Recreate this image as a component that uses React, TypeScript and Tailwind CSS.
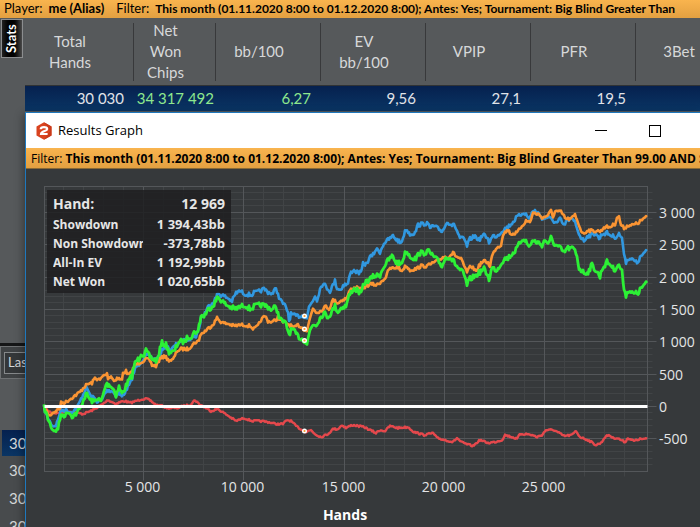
import { ChevronDown } from 'lucide-react';

const STATS_FILTER = 'This month (01.11.2020 8:00 to 01.12.2020 8:00); Antes: Yes; Tournament: Big Blind Greater Than';
const GRAPH_FILTER = `${STATS_FILTER} 99.00 AND St`;

const COLUMNS = [
  { lines: ['Total', 'Hands'], value: '30 030', width: 'w-[109px]', cell: 'pr-[10px]' },
  { lines: ['Net', 'Won', 'Chips'], value: '34 317 492', width: 'w-[82px]', cell: 'pr-[2px] text-[#8ee88e]' },
  { lines: ['bb/100'], value: '6,27', width: 'w-[105px]', cell: 'pr-[10px] text-[#8ee88e]' },
  { lines: ['EV', 'bb/100'], value: '9,56', width: 'w-[105px]', cell: 'pr-[10px]' },
  { lines: ['VPIP'], value: '27,1', width: 'w-[105px]', cell: 'pr-[10px]' },
  { lines: ['PFR'], value: '19,5', width: 'w-[105px]', cell: 'pr-[10px]' },
  { lines: ['3Bet'], value: '', width: 'w-[105px]', cell: 'pr-[10px]' },
];

const LEGEND = [
  ['Showdown', '1 394,43bb'],
  ['Non Showdown', '-373,78bb'],
  ['All-In EV', '1 192,99bb'],
  ['Net Won', '1 020,65bb'],
];

// Plot area, in the units of the chart's viewBox
const LEFT = 44.5;
const RIGHT = 647.5;
const TOP = 186.5;
const BOTTOM = 471.5;

const xOf = (hands: number) => Math.round(42.75 + hands * 0.02005) + 0.5;
const yOf = (bb: number) => Math.round(406 - bb * 0.0647) + 0.5;

const SHOWDOWN =
  '44,407 46,414 50,422 53,426 56,425 58,420 60,412 62,410 66,410 70,412 74,411 78,406 82,397 86,388 88,390 91,397 94,398 98,402 102,400 105,393 108,390 112,391 116,395 119,393 122,397 126,390 130,384 133,375 136,367 139,364 144,358 148,355 152,358 156,360 160,356 163,348 166,346 171,350 175,346 179,342 183,341 188,339 192,337 196,336 199,329 201,317 204,315 208,307 212,303 216,298 218,293 221,295 226,297 232,301 236,293 240,291 245,294 252,295 253,293 258,292 264,289 268,292 273,294 276,287 278,295 281,301 285,306 288,312 289,321 291,314 295,316 298,316 304,316 307,318 309,307 312,302 315,296 317,300 320,289 323,283 327,288 330,291 335,281 337,288 341,290 343,285 348,284 350,274 353,270 357,272 361,273 363,264 367,264 369,258 373,255 376,249 380,252 384,243 388,240 393,236 397,240 401,243 406,229 410,234 415,233 418,225 423,224 427,223 430,228 433,226 437,228 442,231 445,227 447,221 450,224 455,226 457,231 460,238 464,239 467,246 470,239 475,236 479,240 483,235 487,237 489,242 493,236 497,236 502,231 506,228 509,226 513,222 517,217 519,216 524,212 527,216 529,219 532,212 535,211 538,213 543,219 548,217 552,220 557,223 560,219 564,226 567,220 571,219 575,222 577,228 580,236 584,241 587,236 592,235 596,233 599,239 602,234 607,233 612,236 616,237 619,234 622,238 623,248 626,262 629,258 633,260 637,263 642,255 647,251';
const ALL_IN_EV =
  '44,407 47,412 50,416 52,413 56,411 60,408 61,403 66,402 70,399 76,395 80,392 84,387 88,384 92,383 95,378 100,380 103,376 107,374 108,378 111,376 114,381 117,378 122,380 123,373 126,371 128,375 131,373 133,369 135,365 139,363 143,361 147,359 150,361 152,365 156,366 160,359 163,357 164,355 168,360 173,360 177,351 181,349 188,349 192,345 196,342 199,341 200,335 204,332 210,327 214,323 217,318 220,321 223,323 229,324 234,326 240,325 245,325 250,326 254,329 258,326 261,320 265,316 268,321 272,322 276,320 278,317 281,321 285,323 290,325 294,328 298,325 301,327 304,329 307,331 310,318 313,308 316,312 321,311 326,306 329,309 333,300 338,303 342,300 347,298 350,290 356,287 361,290 366,286 371,284 377,285 383,280 386,277 389,269 394,268 398,267 401,271 406,266 410,270 416,269 421,266 427,266 433,263 438,261 443,257 448,257 453,253 457,257 461,259 464,266 467,272 471,266 476,271 481,263 485,261 488,263 490,266 492,256 496,248 501,245 503,234 508,230 511,234 517,233 521,227 526,221 530,222 533,213 538,214 543,218 548,215 551,211 553,217 555,211 561,212 566,219 571,219 575,215 578,222 580,228 583,234 588,230 592,231 595,231 601,231 604,227 610,227 615,224 617,217 619,217 621,225 624,228 629,225 633,225 638,223 643,219 647,217';
const NET_WON =
  '44,407 47,416 50,424 53,430 58,430 59,421 62,415 66,415 68,411 72,416 77,413 81,407 84,398 87,394 90,400 94,402 97,398 101,402 104,392 106,384 110,385 114,390 116,395 119,387 122,394 125,388 129,380 132,376 134,366 136,361 139,359 141,353 144,355 146,351 150,357 153,359 157,361 160,349 162,343 166,345 169,352 174,352 179,341 184,342 188,337 192,336 195,331 198,333 199,325 201,316 204,316 208,310 211,307 214,304 218,297 221,300 225,304 230,307 235,309 240,307 245,305 250,309 255,306 261,305 267,306 272,310 276,306 278,314 281,320 286,324 289,334 292,329 296,334 300,338 304,340 307,344 310,330 313,324 316,325 320,318 324,313 328,317 331,313 335,306 338,312 342,307 346,306 349,296 353,289 357,290 361,294 364,283 369,280 374,276 380,275 383,268 387,262 392,256 396,262 401,264 403,259 406,251 411,257 416,259 419,253 424,253 428,251 433,256 438,261 442,266 446,257 450,257 454,262 458,268 463,273 465,278 467,285 470,279 475,276 480,272 484,269 487,274 489,279 492,268 497,270 500,265 504,259 508,258 512,254 516,250 521,241 524,238 529,247 532,241 537,242 542,245 545,240 549,244 551,238 555,245 560,248 564,253 567,248 574,249 577,256 579,268 584,273 588,272 592,265 597,272 600,277 602,269 607,262 611,265 614,270 618,265 622,270 623,284 626,295 629,290 633,294 638,293 642,287 647,283';
const NON_SHOWDOWN =
  '44,407 48,411 53,413 60,413 66,411 72,412 78,413 83,414 88,412 93,410 98,407 103,404 108,400 112,402 116,404 120,402 125,401 130,403 136,401 142,399 147,399 151,401 156,405 162,406 168,408 178,408 183,406 190,405 195,400 199,404 206,408 211,411 218,409 224,413 230,417 236,421 244,418 252,421 260,421 268,422 276,424 283,424 287,420 291,421 296,426 302,430 306,432 311,430 315,434 321,437 328,434 333,429 338,429 342,425 346,428 352,425 358,426 364,427 372,431 376,433 380,430 385,431 390,426 398,428 408,427 414,432 424,435 433,433 437,438 445,440 453,442 457,438 461,442 466,444 473,446 480,440 488,443 495,442 502,440 505,435 512,437 517,439 520,434 526,434 532,435 537,437 542,435 546,430 554,430 559,433 564,436 572,435 576,431 580,437 588,440 596,445 601,443 605,437 609,435 613,438 617,438 625,442 628,438 634,441 640,439 647,439';

function swings(samples: string, size: number) {
  const pts = samples.split(' ').map((p) => p.split(',').map(Number));
  const out: string[] = [];
  let seed = 7;
  for (let i = 0; i < pts.length - 1; i++) {
    const [x0, y0] = pts[i];
    const [x1, y1] = pts[i + 1];
    for (let x = x0; x < x1; x++) {
      seed = (seed * 16807) % 2147483647;
      const noise = (seed / 2147483647 - 0.5) * 2 * size;
      out.push(`${x},${(y0 + ((y1 - y0) * (x - x0)) / (x1 - x0) + noise).toFixed(1)}`);
    }
  }
  out.push(pts[pts.length - 1].join(','));
  return out.join(' ');
}

const range = (from: number, to: number, step: number) =>
  Array.from({ length: Math.floor((to - from) / step) + 1 }, (_, i) => from + i * step);

const fmt = (n: number) => (Math.abs(n) >= 1000 ? `${Math.floor(n / 1000)} ${String(n % 1000).padStart(3, '0')}` : String(n));

function Chart() {
  return (
    <svg viewBox="26 169 674 358" className="block w-full" role="img" aria-label="Results by hands">
      {/* Grid */}
      <g stroke="#414446" strokeWidth="1">
        {range(-900, 3300, 100).map((v) => (
          <line key={v} x1={LEFT} x2={RIGHT + 5} y1={yOf(v)} y2={yOf(v)} />
        ))}
        {range(1000, 29000, 1000).map((v) => (
          <line key={v} x1={xOf(v)} x2={xOf(v)} y1={TOP} y2={BOTTOM + 5} />
        ))}
      </g>
      <g stroke="#54575a" strokeWidth="1">
        {range(-500, 3000, 500).map((v) => (
          <line key={v} x1={LEFT} x2={RIGHT + 9} y1={yOf(v)} y2={yOf(v)} />
        ))}
        {range(5000, 25000, 5000).map((v) => (
          <line key={v} x1={xOf(v)} x2={xOf(v)} y1={TOP} y2={BOTTOM + 9} />
        ))}
        <rect x={LEFT} y={TOP} width={RIGHT - LEFT} height={BOTTOM - TOP} fill="none" />
      </g>

      {/* Series */}
      <g fill="none" strokeLinejoin="round">
        <polyline points={swings(NON_SHOWDOWN, 0.9)} stroke="#e5484c" strokeWidth="2.4" />
        <polyline points={swings(SHOWDOWN, 2)} stroke="#3198e0" strokeWidth="2.6" />
        <polyline points={swings(ALL_IN_EV, 1.6)} stroke="#fa9433" strokeWidth="2.6" />
        <polyline points={swings(NET_WON, 2.6)} stroke="#2cf035" strokeWidth="2.8" />
      </g>
      <line x1={LEFT} x2={RIGHT} y1="406.5" y2="406.5" stroke="#ffffff" strokeWidth="3" />
      {[316, 329, 340.5, 431].map((y) => (
        <circle key={y} cx="304.5" cy={y} r="1.8" fill="#f59a2d" stroke="#ffffff" strokeWidth="1.4" />
      ))}

      {/* Axis labels */}
      <g fill="#e4e5e6" fontSize="14" fontFamily="'Open Sans', sans-serif">
        {range(-500, 3000, 500).map((v) => (
          <text key={v} x="659" y={yOf(v) + 5}>
            {fmt(v)}
          </text>
        ))}
        {range(5000, 25000, 5000).map((v) => (
          <text key={v} x={xOf(v) - 1} y="492" textAnchor="middle">
            {fmt(v)}
          </text>
        ))}
        <text x="345" y="520" textAnchor="middle" fontWeight="700" fill="#ffffff">
          Hands
        </text>
      </g>
    </svg>
  );
}

function HandInfo() {
  return (
    <div className="absolute top-[21px] left-[21px] w-[184px] h-[103px] bg-[#1e1f21]/85 px-1.5 pt-[3px] font-bold text-[#e6e6e6]">
      <div className="flex justify-between text-sm leading-[22px]">
        <span>Hand:</span>
        <span>12 969</span>
      </div>
      {LEGEND.map(([name, value]) => (
        <div key={name} className="flex justify-between leading-[19px] whitespace-nowrap">
          <span className="w-[90px] overflow-hidden text-[12px]">{name}</span>
          <span className="text-[13px]">{value}</span>
        </div>
      ))}
    </div>
  );
}

function ResultsWindow() {
  return (
    <section className="absolute top-[112px] left-[25px] right-0 min-h-[415px] overflow-hidden border-t border-l border-[#1f78bd] bg-[#36393b] font-['Open_Sans',sans-serif] shadow-[-2px_2px_8px_rgba(0,0,0,0.35)]">
      <header className="flex h-[35px] items-center bg-white pl-2.5 pr-[18px] text-black">
        <svg viewBox="0 0 16 18" className="mr-1.5 h-[18px] w-4" aria-hidden="true">
          <path d="M8 .3 15.5 4.6V13.4L8 17.7 .5 13.4V4.6Z" fill="#d9431f" />
          <path d="M8 .3 15.5 4.6V13.4L8 17.7 14 9Z" fill="#c93a1a" />
          <path d="M4.7 7.2C4.8 5.6 6 5.2 8 5.200C10 5.2 11.200 5.6 11.200 6.900C11.200 9.200 5.200 8.800 5 12H11.600" fill="none" stroke="#ffffff" strokeWidth="2.200" />
        </svg>
        <h1 className="flex-1 text-[13px]">Results Graph</h1>
        <button type="button" aria-label="Minimize" className="flex h-full w-[54px] items-center justify-center">
          <span className="h-px w-3 bg-black" />
        </button>
        <button type="button" aria-label="Maximize" className="flex h-full w-[54px] items-center justify-center">
          <span className="size-3 border border-black" />
        </button>
      </header>
      <p className="h-[21px] overflow-hidden border-b border-[#8a6a35] bg-linear-to-b from-[#f9b44e] to-[#e3a041] pl-[5px] text-[12px] leading-[22px] whitespace-nowrap text-black">
        Filter: <b>{GRAPH_FILTER}</b>
      </p>
      <div className="relative">
        <Chart />
        <HandInfo />
      </div>
    </section>
  );
}

function StatsTable() {
  return (
    <table className="w-[716px] table-fixed border-collapse">
      <thead>
        <tr className="h-[67px]">
          {COLUMNS.map((c, i) => (
            <th key={i} className={`p-0 pt-px font-normal text-[15px] leading-[21px] text-[#d6d8d9] ${c.width}`}>
              <div className="flex h-[58px] flex-col justify-center border-r border-[#38393b] pr-[18px]">
                {c.lines.map((l) => (
                  <span key={l}>{l}</span>
                ))}
              </div>
            </th>
          ))}
        </tr>
      </thead>
      <tbody>
        <tr className="h-[26px] border-t border-[#303335] bg-linear-to-b from-[#06214f] to-[#0a3564] text-right text-[15px] leading-[25px] text-[#e0e3e8]">
          {COLUMNS.map((c, i) => (
            <td key={i} className={`p-0 whitespace-nowrap ${c.cell}`}>
              {c.value}
            </td>
          ))}
        </tr>
      </tbody>
    </table>
  );
}

export default function App() {
  return (
    <main className="relative min-h-screen overflow-hidden bg-[#56595b] font-['Lato',sans-serif]">
      <p className="flex h-[18px] overflow-hidden bg-linear-to-b from-[#f9b44e] to-[#e3a041] pl-1 text-[13px] leading-[17px] whitespace-nowrap text-black">
        <span>Player:</span>
        <b className="ml-1.5">me (Alias)</b>
        <span className="ml-3">Filter:</span>
        <b className="ml-1.5 text-[12px]">{STATS_FILTER}</b>
      </p>
      <div className="flex">
        <aside className="w-[25px] shrink-0 pt-px">
          <button
            type="button"
            className="ml-px flex h-[39px] w-[22px] rotate-180 items-center justify-center border border-[#8b8d8f] bg-linear-to-r from-[#4a4a4a] via-black to-[#222222] text-[13px] font-bold text-white [writing-mode:vertical-rl]"
          >
            Stats
          </button>
        </aside>
        <div className="min-w-0 flex-1 overflow-hidden bg-[#56595b]">
          <StatsTable />
        </div>
      </div>

      {/* Lower panel, mostly under the graph window */}
      <div className="mt-[232px] h-[184px] border-t-[3px] border-[#151617] bg-[#484b4d]">
        <div className="flex h-[33px] items-center border border-[#6e7173] bg-[#3f4244] pl-[3px]">
          <button type="button" className="flex h-[22px] w-40 items-center justify-between border border-[#85888a] bg-[#343739] px-[3px] text-[13px] text-[#d6d8d9]">
            Last sessions
            <ChevronDown size={12} />
          </button>
        </div>
        <div className="h-[51px] bg-[#56595b]" />
        <ul className="pl-0.5 text-[15px] leading-7 text-[#d6d8d9]">
          <li className="h-[26px] bg-linear-to-b from-[#06214f] to-[#0a3564] pl-[7px] leading-[26px]">30</li>
          <li className="pl-[7px]">30</li>
          <li className="pl-[7px]">30</li>
          <li className="pl-[7px]">30</li>
        </ul>
      </div>

      <ResultsWindow />
    </main>
  );
}
